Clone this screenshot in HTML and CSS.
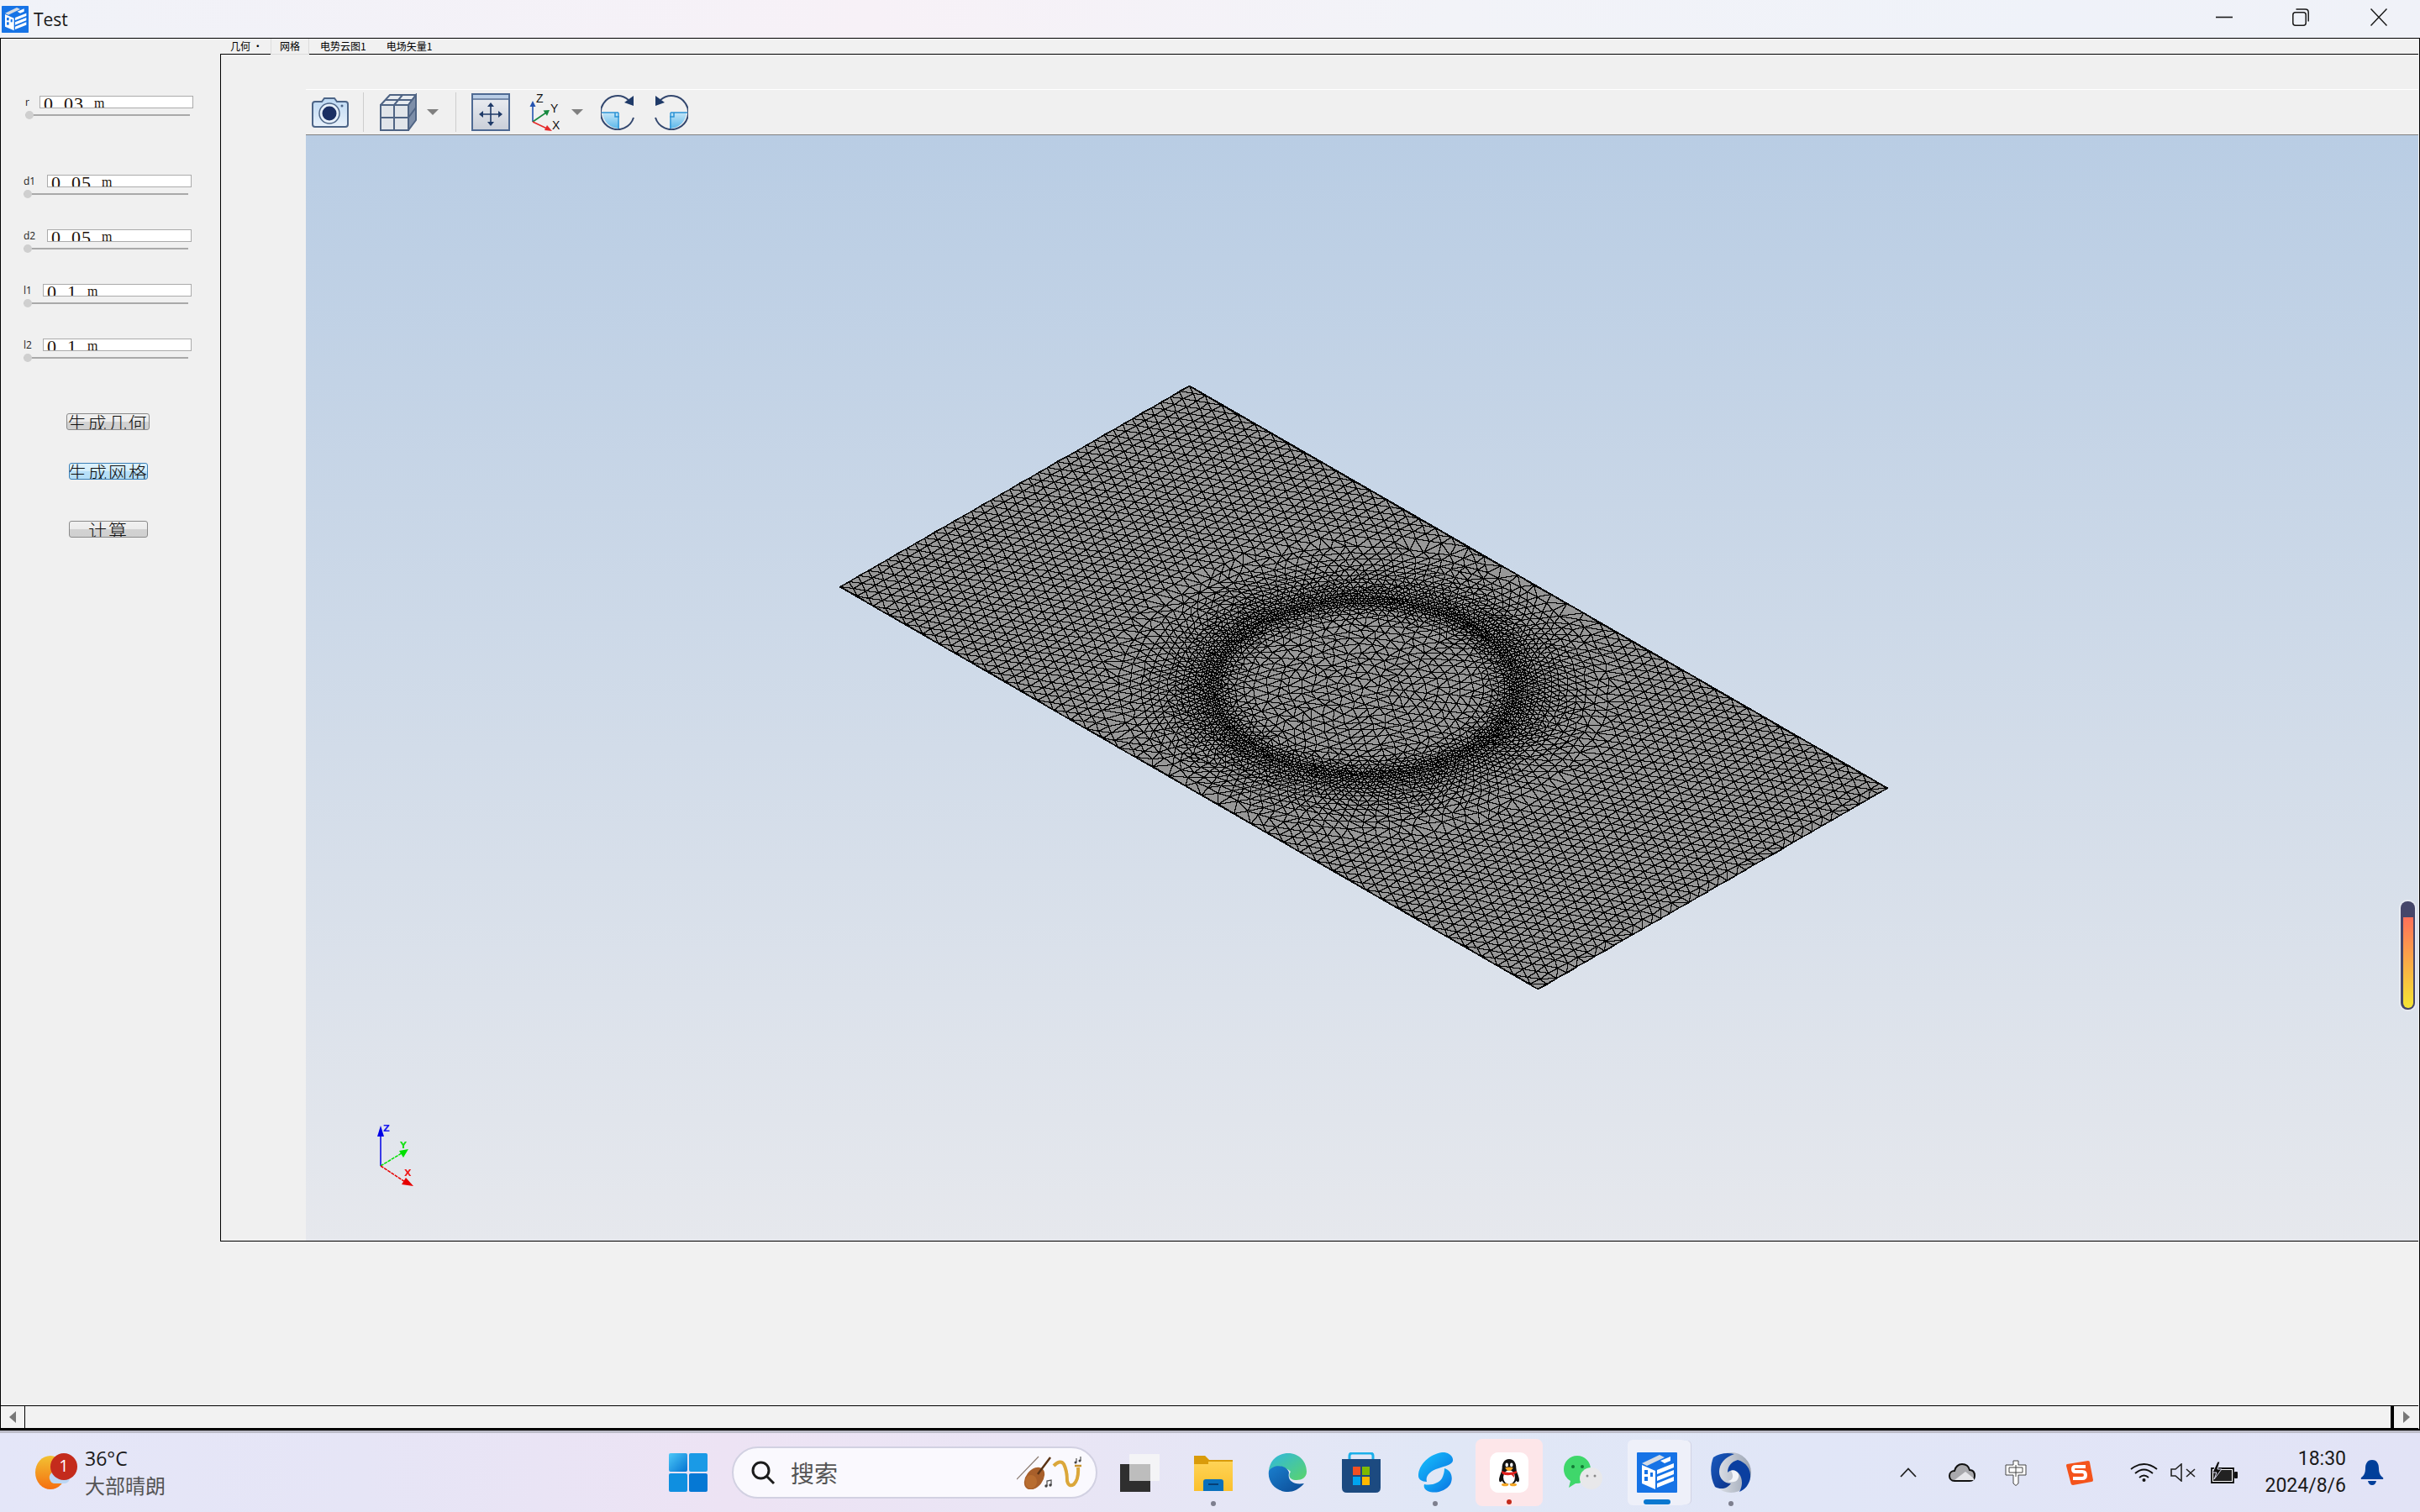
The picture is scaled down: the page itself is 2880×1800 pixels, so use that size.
FILE: index.html
```html
<!DOCTYPE html>
<html lang="zh">
<head>
<meta charset="utf-8">
<title>Test</title>
<link rel="stylesheet" href="styles.css">
</head>
<body>
<svg class="defs" width="0" height="0">
  <symbol id="applogo" viewBox="0 0 48 48">
    <rect width="48" height="48" rx="1" fill="#1673e6"/>
    <polygon points="6,13 27,3 33,6 12,16" fill="#d5dbe4"/>
    <polygon points="28,10 40,5 40,10 33,13" fill="#fff"/>
    <polygon points="6,15 22,22 22,44 6,37" fill="#fff"/>
    <rect x="9" y="21" width="4" height="5" fill="#1673e6"/>
    <rect x="9" y="29" width="4" height="5" fill="#1673e6"/>
    <rect x="16" y="24" width="3" height="5" fill="#1673e6"/>
    <polygon points="24,21 44,13 44,18 24,26" fill="#fff"/>
    <polygon points="24,29 44,21 44,26 24,34" fill="#fff"/>
    <polygon points="24,37 44,29 44,34 24,42" fill="#fff"/>
  </symbol>
  <linearGradient id="camfill" x1="0" y1="0" x2="0" y2="1"><stop offset="0" stop-color="#bcd8f3"/><stop offset="1" stop-color="#e8f1fa"/></linearGradient>
  <linearGradient id="fitfill" x1="0" y1="0" x2="0" y2="1"><stop offset="0" stop-color="#eef0f4"/><stop offset="1" stop-color="#c9ced8"/></linearGradient>
  <linearGradient id="rotfill" x1="0" y1="0" x2="0" y2="1"><stop offset="0" stop-color="#c4e6f8"/><stop offset="1" stop-color="#5db8ea"/></linearGradient>
  <linearGradient id="edgea" x1="0" y1="0" x2="1" y2="1"><stop offset="0" stop-color="#2fb7e0"/><stop offset="1" stop-color="#5bd46a"/></linearGradient>
  <linearGradient id="edgeb" x1="0" y1="0" x2="1" y2="1"><stop offset="0" stop-color="#1a7fce"/><stop offset="1" stop-color="#0b4a94"/></linearGradient>
  <linearGradient id="zbr" x1="0" y1="0" x2="1" y2="1"><stop offset="0" stop-color="#17c7ff"/><stop offset="1" stop-color="#0a6fe0"/></linearGradient>
  <linearGradient id="wina" x1="0" y1="0" x2="1" y2="1"><stop offset="0" stop-color="#4cc8f8"/><stop offset="1" stop-color="#0574d2"/></linearGradient>
  <linearGradient id="sun" x1="0" y1="0" x2="0" y2="1"><stop offset="0" stop-color="#f2c233"/><stop offset="1" stop-color="#f56f10"/></linearGradient>
  <linearGradient id="folder" x1="0" y1="0" x2="0" y2="1"><stop offset="0" stop-color="#ffd75e"/><stop offset="1" stop-color="#fbc02d"/></linearGradient>
  <linearGradient id="swirl" x1="0" y1="0" x2="1" y2="1"><stop offset="0" stop-color="#1a5cc0"/><stop offset="1" stop-color="#0a2f86"/></linearGradient>
  <linearGradient id="silver" x1="0" y1="0" x2="1" y2="0"><stop offset="0" stop-color="#e9ecf2"/><stop offset="1" stop-color="#9aa3b2"/></linearGradient>
</svg>

<header class="titlebar">
  <svg class="title-icon"><use href="#applogo"/></svg>
  <span class="title-text">Test</span>
  <div class="win-controls">
    <svg class="win-btn win-min" viewBox="0 0 20 21"><path d="M0 10.5H20" stroke="#1a1a1a" stroke-width="1.6"/></svg>
    <svg class="win-btn win-max" viewBox="0 0 20 21" fill="none" stroke="#1a1a1a" stroke-width="1.5"><rect x="0.8" y="4.8" width="15.4" height="15.4" rx="3"/><path d="M4.5 1H15.5Q19.2 1 19.2 4.7V15.5"/></svg>
    <svg class="win-btn win-close" viewBox="0 0 20 21" fill="none" stroke="#1a1a1a" stroke-width="1.5"><path d="M0.5 0.5L19.5 20.5M19.5 0.5L0.5 20.5"/></svg>
  </div>
</header>

<main class="window">
  <div class="work">
    <aside class="side">
      <div class="param param-r">
        <div class="param-row"><label class="param-label">r</label><div class="param-field"><span class="val">0<i class="dot">.</i>03 <i class="unit">m</i></span></div></div>
        <div class="slider"><span class="thumb"></span></div>
      </div>
      <div class="param param-d param-first">
        <div class="param-row"><label class="param-label">d1</label><div class="param-field"><span class="val">0<i class="dot">.</i>05 <i class="unit">m</i></span></div></div>
        <div class="slider"><span class="thumb"></span></div>
      </div>
      <div class="param param-d">
        <div class="param-row"><label class="param-label">d2</label><div class="param-field"><span class="val">0<i class="dot">.</i>05 <i class="unit">m</i></span></div></div>
        <div class="slider"><span class="thumb"></span></div>
      </div>
      <div class="param param-l">
        <div class="param-row"><label class="param-label">l1</label><div class="param-field"><span class="val">0<i class="dot">.</i>1 <i class="unit">m</i></span></div></div>
        <div class="slider"><span class="thumb"></span></div>
      </div>
      <div class="param param-l">
        <div class="param-row"><label class="param-label">l2</label><div class="param-field"><span class="val">0<i class="dot">.</i>1 <i class="unit">m</i></span></div></div>
        <div class="slider"><span class="thumb"></span></div>
      </div>
      <button class="act act-geo">生成几何</button>
      <button class="act act-mesh">生成网格</button>
      <button class="act act-calc">计算</button>
    </aside>

    <section class="tabs-area">
      <nav class="tabbar">
        <span class="tab tab-first">几何 ·</span>
        <span class="tab tab-active">网格</span>
        <span class="tab tab-third">电势云图1</span>
        <span class="tab">电场矢量1</span>
      </nav>
      <div class="pane">
        <div class="pane-gutter"></div>
        <div class="viewer">
          <div class="toolbar">
            <svg class="ti ti-cam" viewBox="0 0 45 37">
              <path d="M2 9Q2 6 5 6H13L16 2H28L31 6H41Q44 6 44 9V33Q44 36 41 36H5Q2 36 2 33Z" fill="url(#camfill)" stroke="#4d6587" stroke-width="2"/>
              <circle cx="22" cy="20" r="12" fill="#e8f1fa" stroke="#4d6587" stroke-width="1.5"/>
              <circle cx="22" cy="20" r="8.5" fill="#1b2f63"/>
              <circle cx="37" cy="11" r="1.5" fill="#4d6587"/>
            </svg>
            <span class="sep sep-1"></span>
            <svg class="ti ti-cube" viewBox="0 0 44 45" stroke="#4f6484" stroke-width="2" fill="none">
              <polygon points="1,14 12,2 43,2 34,14" fill="#e7ebf0"/>
              <rect x="1" y="14" width="33" height="30" fill="#e1e5ea"/>
              <polygon points="34,14 43,2 43,32 34,44" fill="#7d8ea8"/>
              <path d="M17 14V44M1 29H34M34 29L43 17M7 8H38M17 14L27 2"/>
            </svg>
            <span class="caret caret-1"></span>
            <span class="sep sep-2"></span>
            <svg class="ti ti-fit" viewBox="0 0 46 45">
              <rect x="1" y="1" width="44" height="43" fill="url(#fitfill)" stroke="#4f6a93" stroke-width="2"/>
              <rect x="2" y="2" width="42" height="4" fill="#b9cde6"/>
              <path d="M2 7H44" stroke="#4f6a93" stroke-width="1.5"/>
              <path d="M23 14V36M12 25H34" stroke="#1f3a68" stroke-width="1.6"/>
              <path d="M23 11L27 16H19ZM23 39L27 34H19ZM9 25L14 21V29ZM37 25L32 21V29Z" fill="#1f3a68"/>
            </svg>
            <svg class="ti ti-axes" viewBox="0 0 36 45">
              <path d="M4 34V11" stroke="#2453b0" stroke-width="1.6"/><path d="M4 9L7.5 16H.5Z" fill="#2453b0"/>
              <path d="M4 34L20 23" stroke="#16893f" stroke-width="1.6"/><path d="M24 20L21 27L16.500 20.500Z" fill="#16893f"/>
              <path d="M4 34L23 43" stroke="#e52b2b" stroke-width="1.6"/><path d="M27 45L18 44L21 38Z" fill="#e52b2b"/>
              <text x="8" y="11" class="axis-t">Z</text><text x="25" y="23" class="axis-t">Y</text><text x="27" y="43" class="axis-t">X</text>
            </svg>
            <span class="caret caret-2"></span>
            <svg class="ti ti-rot1" viewBox="0 0 42 42">
              <path d="M2 21H22V40A20 20 0 0 1 2 21Z" fill="url(#rotfill)"/>
              <path d="M17 21V26H22" fill="none" stroke="#2b93d5" stroke-width="1.5"/>
              <path d="M1 21H21M21 21V40" stroke="#2b93d5" stroke-width="1.3" fill="none"/>
              <path d="M39 27A20 20 0 1 1 33 6" fill="none" stroke="#34486f" stroke-width="2"/>
              <path d="M28 9L39 1V13Z" fill="#1f3a68"/>
            </svg>
            <svg class="ti ti-rot2" viewBox="0 0 42 42">
              <path d="M40 21H20V40A20 20 0 0 0 40 21Z" fill="url(#rotfill)"/>
              <path d="M25 21V26H20" fill="none" stroke="#2b93d5" stroke-width="1.500"/>
              <path d="M41 21H21M21 21V40" stroke="#2b93d5" stroke-width="1.3" fill="none"/>
              <path d="M3 27A20 20 0 1 0 9 6" fill="none" stroke="#34486f" stroke-width="2"/>
              <path d="M14 9L3 1V13Z" fill="#1f3a68"/>
            </svg>
          </div>
          <div class="viewport">
            <canvas id="mesh" class="mesh" width="2514" height="1316"></canvas>
            <svg class="triad" viewBox="0 0 60 90" width="60" height="90">
              <path d="M13 52V10" stroke="#0000e6" stroke-width="1.5"/><path d="M13 4L17 17H9Z" fill="#0000e6"/>
              <path d="M13 52L41 35" stroke="#00e000" stroke-width="1.5" stroke-dasharray="4 1"/><path d="M46 32L40 42L35 34Z" fill="#00e000"/>
              <path d="M13 52L42 71" stroke="#e60000" stroke-width="1.5" stroke-dasharray="4 1"/><path d="M52 76L38 74L43 66Z" fill="#e60000"/>
              <text x="16" y="11" class="triad-t tz">Z</text>
              <text x="36" y="31" class="triad-t ty">Y</text>
              <text x="41" y="64" class="triad-t tx">X</text>
            </svg>
            <div class="colorbar"><span class="colorbar-fill"></span></div>
          </div>
        </div>
      </div>
    </section>
  </div>
  <div class="hscroll">
    <span class="sb-btn sb-left"><i class="arr arr-l"></i></span>
    <span class="sb-track"></span>
    <span class="sb-thumb"></span>
    <span class="sb-btn sb-right"><i class="arr arr-r"></i></span>
  </div>
</main>

<footer class="taskbar">
  <div class="weather">
    <svg class="weather-icon" viewBox="0 0 44 40">
      <ellipse cx="18" cy="20" rx="18" ry="20" fill="url(#sun)"/>
      <path d="M18 30a7 7 0 0 1 2-10a9 9 0 0 1 16 1a6 6 0 0 1 2 11a5 5 0 0 1-3 1H22a5 5 0 0 1-4-3Z" fill="#bcd7f4"/>
    </svg>
    <span class="badge">1</span>
    <div class="weather-text"><span class="w-temp">36°C</span><span class="w-desc">大部晴朗</span></div>
  </div>
  <svg class="start" viewBox="0 0 46 46">
    <rect width="22" height="22" rx="2" fill="url(#wina)"/>
    <rect x="24" width="22" height="22" rx="2" fill="#1a9ae6"/>
    <rect y="24" width="22" height="22" rx="2" fill="#0f8fe0"/>
    <rect x="24" y="24" width="22" height="22" rx="2" fill="#0578d4"/>
  </svg>
  <div class="search">
    <svg class="search-glass" viewBox="0 0 30 30" fill="none" stroke="#1c1c1c" stroke-width="3"><circle cx="12.500" cy="12.500" r="9.500"/><path d="M19.500 19.500L28 28"/></svg>
    <span class="search-text">搜索</span>
    <svg class="search-art" viewBox="0 0 78 40">
      <path d="M0 28L26 1" stroke="#8a7a70" stroke-width="1.200"/>
      <ellipse cx="21" cy="27" rx="10" ry="15" transform="rotate(38 21 27)" fill="#a85f2a"/>
      <ellipse cx="17" cy="31" rx="7" ry="8" fill="#b86d30"/>
      <path d="M25 22L40 2" stroke="#5b3315" stroke-width="2.500"/>
      <path d="M36 36v-6l5-1v6" stroke="#555" stroke-width="1.300" fill="none"/>
      <circle cx="35" cy="36" r="1.700" fill="#444"/><circle cx="40" cy="35" r="1.700" fill="#444"/>
      <path d="M44 12Q52 4 56 10Q60 18 60 30Q62 38 68 34Q74 28 73 14" fill="none" stroke="#dba73a" stroke-width="4"/>
      <path d="M69 12H77" stroke="#c8922a" stroke-width="2.500"/>
      <path d="M71 3v5M76 1v5" stroke="#555" stroke-width="1.200"/><circle cx="70" cy="8" r="1.500" fill="#444"/><circle cx="75" cy="6" r="1.500" fill="#444"/>
    </svg>
  </div>
  <div class="apps">
    <div class="app">
      <svg class="app-icon" viewBox="0 0 48 48">
        <rect x="1" y="14" width="36" height="33" fill="#2f2f2f"/>
        <rect x="12" y="2" width="36" height="32" rx="1" fill="#f4f4f6"/>
        <rect x="12" y="14" width="25" height="20" fill="#bdbdbd"/>
      </svg>
    </div>
    <div class="app app-dot">
      <svg class="app-icon" viewBox="0 0 48 48">
        <path d="M1 4H14L19 9H47V46H1Z" fill="url(#folder)"/>
        <path d="M1 4H14L19 9H47V11H18V14H1Z" fill="#d99b0a"/>
        <path d="M12 46V35Q12 32 15 32H33Q36 32 36 35V46Z" fill="#0a70bc"/>
        <rect x="18" y="37" width="12" height="2" fill="#063f75"/>
      </svg>
    </div>
    <div class="app">
      <svg class="app-icon" viewBox="0 0 48 48">
        <path d="M2 22C3 9 13 1 25 1C38 1 47 11 47 23C47 30 41 33 35 33C28 33 24 29 28 23C23 17 10 17 2 22Z" fill="url(#edgea)"/>
        <path d="M2 22C8 13 23 15 26 24C24 33 30 39 44 37C38 44 31 47 25 47C11 47 0 36 2 22Z" fill="url(#edgeb)"/>
      </svg>
    </div>
    <div class="app">
      <svg class="app-icon" viewBox="0 0 48 48">
        <path d="M10 9V4Q10 1 13 1H35Q38 1 38 4V9" fill="none" stroke="#1cb0ea" stroke-width="3"/>
        <path d="M1 8H47V42Q47 48 41 48H7Q1 48 1 42Z" fill="#1c4a80"/>
        <rect x="14" y="17" width="9" height="10" fill="#f25022"/><rect x="25" y="17" width="9" height="10" fill="#7fba00"/>
        <rect x="14" y="29" width="9" height="10" fill="#00a4ef"/><rect x="25" y="29" width="9" height="10" fill="#ffb900"/>
      </svg>
    </div>
    <div class="app app-dot">
      <svg class="app-icon" viewBox="0 0 44 48">
        <path d="M30 0C16 2 2 14 2 28C2 32 6 35 12 35C10 28 16 22 26 19C34 16 42 15 43 10C44 4 36 -1 30 0Z" fill="url(#zbr)"/>
        <path d="M33 19C41 21 44 30 40 38C35 46 22 50 13 46C9 44 8 41 9 38C18 40 27 36 30 31C32 27 33 23 33 19Z" fill="url(#zbr)"/>
      </svg>
    </div>
    <div class="app app-qq">
      <span class="qq-tile">
        <svg class="qq-icon" viewBox="0 0 46 48">
          <path d="M23 1C14 1 11 9 11 16C11 22 7 28 6 34C5 40 8 42 11 38C12 42 16 44 23 44C30 44 34 42 35 38C38 42 41 40 40 34C39 28 35 22 35 16C35 9 32 1 23 1Z" fill="#111"/>
          <ellipse cx="23" cy="32" rx="10" ry="12" fill="#fff"/>
          <ellipse cx="19" cy="11" rx="2.500" ry="3.500" fill="#fff"/><ellipse cx="27" cy="11" rx="2.500" ry="3.500" fill="#fff"/>
          <path d="M16 16Q23 13 30 16Q27 21 23 21Q19 21 16 16Z" fill="#f5a623"/>
          <path d="M10 21Q23 27 36 21L36 25L31 27L32 33L27 28Q18 30 11 26Z" fill="#e0201c"/>
          <ellipse cx="16" cy="45" rx="6" ry="2.500" fill="#f5a623"/><ellipse cx="30" cy="45" rx="6" ry="2.500" fill="#f5a623"/>
        </svg>
      </span>
    </div>
    <div class="app">
      <svg class="app-icon" viewBox="0 0 48 48">
        <path d="M17 4C8 4 1 11 1 20C1 26 4 31 9 34L7 42L15 37C23 38 33 30 33 20C33 11 26 4 17 4Z" fill="#3fd76b"/>
        <circle cx="12" cy="17" r="2" fill="#127a35"/><circle cx="23" cy="17" r="2" fill="#127a35"/>
        <path d="M34 18C26 18 20 24 20 31C20 38 26 44 34 44C41 44 47 38 47 31C47 24 41 18 34 18Z" fill="#e8e8ea"/>
        <circle cx="29" cy="28" r="1.500" fill="#888"/><circle cx="38" cy="28" r="1.500" fill="#888"/>
      </svg>
    </div>
    <div class="app app-test">
      <span class="test-tile"><svg class="app-icon"><use href="#applogo"/></svg></span>
      <span class="test-bar"></span>
    </div>
    <div class="app app-dot">
      <svg class="app-icon" viewBox="0 0 48 48">
        <circle cx="24" cy="24" r="24" fill="url(#silver)"/>
        <path d="M3 6C10 1 20 0 28 2C16 6 10 14 10 23C10 31 16 37 24 37C20 43 12 45 5 41C-1 30 -1 16 3 6Z" fill="url(#swirl)"/>
        <path d="M32 9C42 12 48 20 47 30C46 38 41 44 34 47C38 40 38 32 34 26C30 20 24 20 20 24C20 16 25 11 32 9Z" fill="#0b3fa0"/>
        <path d="M24 22C30 20 36 26 32 32C30 36 24 36 20 34C26 34 28 28 24 22Z" fill="#f2f4f8"/>
      </svg>
    </div>
  </div>
  <div class="tray">
    <svg class="tr tr-caret" viewBox="0 0 20 12"><path d="M1 11L10 1.500L19 11" fill="none" stroke="#1f1f1f" stroke-width="1.800"/></svg>
    <svg class="tr tr-cloud" viewBox="0 0 32 22">
      <path d="M7 21C3 21 1 18 1 15C1 11 4 9 7 9C8 4 12 1 16 1C21 1 24 4 25 8C29 8 31 11 31 15C31 18 29 21 25 21Z" fill="#a9a9ad" stroke="#111" stroke-width="2"/>
      <path d="M7 20L20 10L30 18V20Z" fill="#e6e6ea"/>
    </svg>
    <svg class="tr tr-ime" viewBox="0 0 26 31" fill="#fff" stroke="#444" stroke-width="1">
      <path d="M10 1H16V6H25V18H16V28L13 30.500L10 28V18H1V6H10Z"/>
      <path d="M5 9H21V15H5ZM13 6V20" fill="none"/>
    </svg>
    <svg class="tr tr-sogou" viewBox="0 0 32 30">
      <path d="M1 5L26 1Q28 1 28 3L32 24Q32 26 30 26L8 30Q6 30 5.500 28L0 7Q0 5 1 5Z" fill="#f4541c"/>
      <path d="M23 8H11Q8 8 8 11Q8 14 11 14H19Q23 14 23 18Q23 22 19 22H8" fill="none" stroke="#fff" stroke-width="4"/>
    </svg>
    <svg class="tr tr-wifi" viewBox="0 0 33 24" fill="none" stroke="#111" stroke-width="1.800">
      <path d="M1 8Q16.500 -4 32 8M6 13Q16.500 4 27 13M11 18Q16.500 13 22 18"/>
      <circle cx="16.500" cy="21" r="2" fill="#111" stroke="none"/>
    </svg>
    <svg class="tr tr-vol" viewBox="0 0 30 22" fill="none" stroke="#222" stroke-width="1.600">
      <path d="M1 7H6L13 1V21L6 15H1Z"/><path d="M19 7L29 16M29 7L19 16"/>
    </svg>
    <svg class="tr tr-bat" viewBox="0 0 32 26">
      <path d="M1 8H27V25H1Z" fill="#fff" stroke="#111" stroke-width="1.800"/>
      <rect x="3" y="10" width="22" height="13" fill="#222"/>
      <rect x="28" y="12" width="4" height="8" rx="1" fill="#111"/>
      <path d="M8 0L2 13H7L4 21L13 9H8L11 0Z" fill="#111" stroke="#e3e3f6" stroke-width="1"/>
    </svg>
    <div class="clock"><span class="clock-t">18:30</span><span class="clock-d">2024/8/6</span></div>
    <svg class="tr tr-bell" viewBox="0 0 28 30">
      <path d="M14 0C8 0 6 5 6 10C6 16 4 19 1 21Q0 23 2 23H26Q28 23 27 21C24 19 22 16 22 10C22 5 20 0 14 0Z" fill="#003f9a"/>
      <path d="M9 25H19Q18 30 14 30Q10 30 9 25Z" fill="#003f9a"/>
    </svg>
  </div>
</footer>
<script src="mesh.js"></script>
</body>
</html>
```

FILE: styles.css
```css
* { box-sizing: border-box; }
html, body { margin: 0; padding: 0; }
body {
  width: 2880px; height: 1800px; overflow: hidden;
  display: flex; flex-direction: column;
  font-family: "Open Sans", "Noto Sans CJK SC", sans-serif;
  background: #f1f1f1; color: #111;
}
.defs { display: block; width: 0; height: 0; }
i { font-style: normal; }

/* title bar */
.titlebar {
  height: 45px; flex: none; display: flex; align-items: center;
  background: linear-gradient(90deg, #f0f2f8 0, #f7f1f7 36%, #f2f3f8 60%, #eff2f9 85%, #f0f2f8 100%);
}
.title-icon { width: 32px; height: 32px; margin-left: 2px; flex: none; }
.title-text { margin-left: 6px; font-size: 21px; color: #1a1a1a; }
.win-controls { margin-left: auto; display: flex; align-items: center; height: 100%; padding-bottom: 4px; }
.win-btn { width: 20px; height: 21px; flex: none; }
.win-max { margin-left: 71px; }
.win-close { margin-left: 73px; margin-right: 39px; }

/* application window */
.window {
  height: 1658px; flex: none; display: flex; flex-direction: column;
  border: 1px solid #000; border-bottom-width: 2px; background: #f1f1f1;
}
.work { flex: 1; min-height: 0; display: flex; align-items: flex-start; padding-right: 1px; }

/* left parameter panel */
.side { width: 261px; flex: none; display: flex; flex-direction: column; align-items: flex-start; padding-top: 68px; background: #f0f0f0; height: 100%; }
.param { width: 200px; display: flex; flex-direction: column; margin-top: 37px; }
.param-r { margin-top: 0; margin-left: 29px; }
.param-d, .param-l { margin-left: 27px; }
.param-first { margin-top: 66px; }
.param-row { display: flex; align-items: center; height: 15px; }
.param-label { flex: none; font-size: 12px; line-height: 15px; color: #222; white-space: nowrap; }
.param-r .param-label { width: 17px; }
.param-d .param-label { width: 28px; }
.param-l .param-label { width: 23px; }
.param-field {
  flex: 1; min-width: 0; height: 15px; background: #fff; border: 1.5px solid #ababab;
  overflow: hidden; padding-left: 4px;
}
.val {
  display: block; font-family: "Liberation Serif", serif; font-size: 22px; line-height: 12px;
  letter-spacing: 1px; word-spacing: 5.5px; color: #1d1209; white-space: nowrap; margin-top: 2px;
}
.dot { display: inline-block; width: 12px; font-size: 12px; }
.unit { font-size: 16px; letter-spacing: 0; vertical-align: 3px; }
.slider {
  width: 196px; height: 10px; margin-top: 3px; display: flex; align-items: center;
  background: linear-gradient(#a9a9a9, #a9a9a9) center / 100% 2px no-repeat;
}
.thumb { width: 10px; height: 10px; border-radius: 50%; background: #cfcfcf; }
.act {
  height: 20px; padding: 0; overflow: hidden; display: flex; align-items: center; justify-content: center;
  font-family: "Noto Sans CJK SC", sans-serif; font-size: 22px; line-height: 18px; letter-spacing: 2px; font-weight: 300; color: #111;
  border: 1px solid #8a8a8a; border-radius: 3px;
  background: linear-gradient(#f0f0f0 0, #ececec 50%, #d2d2d2 50%, #d0d0d0 100%);
  white-space: nowrap;
}
.act-geo { width: 99px; margin-left: 78px; margin-top: 61px; }
.act-mesh { width: 94px; margin-left: 81px; margin-top: 39px; border-color: #3a7fb5; background: linear-gradient(#dcf1fc 0, #d4eefb 50%, #b8e0f8 50%, #b4def7 100%); }
.act-calc { width: 94px; margin-left: 81px; margin-top: 49px; }

/* tabs */
.tabs-area { flex: 1; min-width: 0; display: flex; flex-direction: column; height: 1432px; }
.tabbar { height: 18px; flex: none; display: flex; align-items: stretch; font-family: "Noto Sans CJK SC", sans-serif; font-size: 12px; }
.tab { padding: 0 13px; line-height: 18px; color: #000; white-space: nowrap; }
.tab-first { width: 60px; padding: 0 0 0 12px; }
.tab-third { padding-right: 11px; }
.tab-active {
  position: relative; z-index: 1; width: 46px; height: 19px; padding: 0 10px; text-align: center;
  background: #f0f0f0; border: 1px solid #dcdcdc; border-top: 0;
}
.pane { flex: 1; min-height: 0; display: flex; border: 1px solid #000; border-right: 0; background: #f0f0f0; }
.pane-gutter { width: 101px; flex: none; }
.viewer { flex: 1; min-width: 0; display: flex; flex-direction: column; padding-top: 41px; }

/* toolbar */
.toolbar {
  height: 55px; flex: none; display: flex; align-items: center;
  background: #f0f0f0; border-top: 1px solid #fff; border-bottom: 1px solid #808080;
}
.ti { flex: none; display: block; }
.ti-cam { width: 45px; height: 37px; margin-left: 6px; }
.sep { width: 1px; height: 47px; background: #cdcdcd; flex: none; }
.sep-1 { margin-left: 17px; }
.ti-cube { width: 44px; height: 45px; margin-left: 19px; }
.caret { width: 0; height: 0; flex: none; border-left: 7px solid transparent; border-right: 7px solid transparent; border-top: 7px solid #808080; }
.caret-1 { margin-left: 12px; }
.sep-2 { margin-left: 20px; }
.ti-fit { width: 46px; height: 45px; margin-left: 18px; }
.ti-axes { width: 36px; height: 45px; margin-left: 23px; }
.axis-t { font-family: "Liberation Sans", sans-serif; font-size: 14px; fill: #111; }
.caret-2 { margin-left: 14px; }
.ti-rot1 { width: 42px; height: 42px; margin-left: 21px; }
.ti-rot2 { width: 42px; height: 42px; margin-left: 20px; }

/* 3D viewport */
.viewport {
  flex: 1; min-height: 0; position: relative; overflow: hidden;
  background: linear-gradient(#b9cde4 0, #e6e8ed 100%);
}
.mesh { display: block; width: 2514px; height: 1316px; }
.triad { position: absolute; left: 76px; top: 1175px; }
.triad-t { font-family: "DejaVu Sans", sans-serif; font-size: 11px; font-weight: 700; }
.tz { fill: #1a1af0; } .ty { fill: #1ae01a; } .tx { fill: #f01a1a; }
.colorbar {
  position: absolute; left: 2493px; top: 912px; width: 17px; height: 129px;
  background: #45466a; border-radius: 8px; box-shadow: 0 0 0 2px #e7eaf1;
  display: flex; justify-content: center; padding-top: 19px; padding-bottom: 2px;
}
.colorbar-fill { width: 12px; display: block; background: linear-gradient(#ff7059, #f5e533); border-radius: 0 0 6px 6px; }

/* horizontal scrollbar */
.hscroll { height: 28px; flex: none; display: flex; border-top: 1px solid #000; border-bottom: 1px solid #000; margin-right: 1px; background: #f2f2f2; }
.sb-btn { width: 29px; flex: none; display: flex; align-items: center; justify-content: center; }
.sb-left { border-right: 1px solid #000; }
.sb-track { flex: 1; }
.sb-thumb { width: 4px; background: #000; flex: none; }
.arr { width: 0; height: 0; border-top: 7px solid transparent; border-bottom: 7px solid transparent; }
.arr-l { border-right: 8px solid #777; }
.arr-r { border-left: 8px solid #777; }

/* taskbar */
.taskbar {
  height: 97px; flex: none; display: flex; align-items: center;
  border-top: 3px solid #bcbcc8;
  background: linear-gradient(90deg, #e4e6f8 0, #e6e5f6 15%, #ede3f4 30%, #eae5f5 42%, #e0e7f6 60%, #e1e6f7 75%, #e2e3f6 100%);
}
.weather { width: 796px; flex: none; display: flex; align-items: center; position: relative; padding-left: 42px; }
.weather-icon { width: 44px; height: 40px; flex: none; }
.badge {
  position: absolute; left: 60px; top: 8px; width: 32px; height: 32px; border-radius: 50%;
  background: #c42b1c; color: #fff; font-size: 20px; line-height: 30px; text-align: center; font-family: "Open Sans", sans-serif;
}
.weather-text { display: flex; flex-direction: column; margin-left: 15px; margin-top: -2px; }
.w-temp { font-size: 23px; line-height: 32px; color: #1a1a1a; }
.w-desc { font-family: "Noto Sans CJK SC", sans-serif; font-size: 24px; line-height: 32px; color: #555; }
.start { width: 46px; height: 46px; flex: none; margin-right: 29px; }
.search {
  width: 435px; height: 62px; flex: none; display: flex; align-items: center;
  background: #faf9fe; border-radius: 31px; border: 2px solid #d2d1e2; padding-left: 20px;
}
.search-glass { width: 30px; height: 30px; flex: none; }
.search-text { margin-left: 18px; font-family: "Noto Sans CJK SC", sans-serif; font-size: 28px; line-height: 32px; color: #555; }
.search-art { width: 78px; height: 40px; margin-left: auto; margin-right: 16px; flex: none; }
.apps { display: flex; align-items: center; height: 100%; margin-left: 6px; }
.app { width: 88px; height: 80px; flex: none; display: flex; align-items: center; justify-content: center; position: relative; }
.app-icon { width: 48px; height: 48px; display: block; }
.app-dot::after {
  content: ""; position: absolute; left: 41px; bottom: 0; width: 6px; height: 6px; border-radius: 50%; background: #7d7f8e;
}
.app-qq { background: #fde6e9; width: 80px; margin: 0 4px; border-radius: 8px; }
.app-qq::after {
  content: ""; position: absolute; left: 37px; bottom: 2px; width: 6px; height: 6px; border-radius: 50%; background: #c42b1c;
}
.qq-tile { width: 46px; height: 48px; background: #fff; border-radius: 10px; display: flex; align-items: center; justify-content: center; }
.qq-icon { width: 32px; height: 40px; display: block; }
.test-tile {
  width: 70px; height: 78px; background: #eef0f9; border-radius: 6px; display: flex; align-items: center; justify-content: center;
  box-shadow: 6px 0 0 -1px #eef0f9, 7px 0 0 -1px #d0d2e4;
}
.test-bar { position: absolute; left: 28px; bottom: 2px; width: 32px; height: 6px; background: #0a78d0; border-radius: 3px; }
.tray { display: flex; align-items: center; flex: none; margin-left: 157px; }
.tr { display: block; flex: none; }
.tr-caret { width: 20px; height: 12px; }
.tr-cloud { width: 32px; height: 22px; margin-left: 38px; }
.tr-ime { width: 26px; height: 31px; margin-left: 35px; }
.tr-sogou { width: 32px; height: 30px; margin-left: 47px; }
.tr-wifi { width: 33px; height: 24px; margin-left: 44px; }
.tr-vol { width: 30px; height: 22px; margin-left: 15px; }
.tr-bat { width: 32px; height: 26px; margin-left: 18px; }
.clock { width: 129px; flex: none; display: flex; flex-direction: column; align-items: flex-end; color: #1a1a1a; font-family: "Roboto", sans-serif; font-size: 23px; line-height: 32px; }
.tr-bell { width: 28px; height: 30px; margin-left: 17px; }
```

FILE: mesh.js
```js
// Builds a graded triangular surface mesh (a plate with a refined circle) and
// rasterises it without anti-aliasing, the way the VTK view does.
(function () {
  var canvas = document.getElementById('mesh');
  var ctx = canvas.getContext('2d');
  var OX = 364, OY = 161;
  var P0 = [1414.5 - OX, 459 - OY];
  var EX = [831 / 959, 479 / 959];
  var EY = [-415.5 / 479, 239 / 479];
  var W = 959, H = 479, CX = W / 2, CY = H / 2, R = 146;
  var HMIN = 4.6, HMAX = 13, SLOPE_OUT = 0.1, SLOPE_IN = 0.22;

  var seed = 12345;
  function rnd() { seed = (seed * 16807) % 2147483647; return seed / 2147483647; }
  function jit(a) { return (rnd() - 0.5) * 2 * a; }
  function size(d) { return Math.min(HMAX, HMIN + (d > 0 ? SLOPE_OUT : SLOPE_IN) * Math.abs(d)); }

  var pts = [];
  function inside(x, y, m) { return x > m && x < W - m && y > m && y < H - m; }
  function ring(r, off) {
    var h = size(r - R), n = Math.max(6, Math.round(2 * Math.PI * r / h)), ja = h * 0.14;
    for (var i = 0; i < n; i++) {
      var t = (i + off) / n * 2 * Math.PI;
      var x = CX + r * Math.cos(t) + jit(ja), y = CY + r * Math.sin(t) + jit(ja);
      if (inside(x, y, h * 0.7)) pts.push([x, y]);
    }
  }
  ring(R, 0);
  var r = R, k = 1, rOut;
  while (size(r - R) < HMAX) { r += size(r - R) * 0.88; ring(r, (k++ % 2) * 0.5); }
  rOut = r;
  r = R; k = 1;
  while (r > 14) { r -= size(r - R) * 0.88; if (r > 5) ring(r, (k++ % 2) * 0.5); }
  pts.push([CX + 0.1, CY + 0.1]);

  // regular lattice outside the graded zone, aligned with the plate edges
  var s = HMAX, colStep = s * 0.866;
  var nx = Math.round(W / colStep), ny = Math.round(H / s);
  var stepX = W / nx, stepY = H / ny;
  for (var j = 1; j < nx; j++) {
    for (var i = 0; i <= ny; i++) {
      var x = j * stepX + jit(0.8), y = (i + (j & 1) * 0.5) * stepY + jit(0.8);
      if (y < stepY * 0.4 || y > H - stepY * 0.4) continue;
      var d = Math.hypot(x - CX, y - CY);
      if (d < rOut + s * 0.65) continue;
      pts.push([x, y]);
    }
  }
  // boundary nodes share the lattice spacing so no slivers form along the edges
  for (i = 0; i <= nx; i++) {
    var oddCol = i & 1;
    if (!oddCol || i === 0 || i === nx) { pts.push([stepX * i, i * 1e-4]); pts.push([stepX * i + 1e-3, H - i * 1e-4]); }
  }
  for (i = 1; i < ny; i++) { pts.push([i * 1e-4, stepY * i]); pts.push([W - i * 1e-4, stepY * i + 1e-3]); }

  // Bowyer-Watson sweep
  function circ(i, j, k, P) {
    var x1 = P[i][0], y1 = P[i][1], x2 = P[j][0], y2 = P[j][1], x3 = P[k][0], y3 = P[k][1];
    var d = 2 * (x1 * (y2 - y3) + x2 * (y3 - y1) + x3 * (y1 - y2));
    var a1 = x1 * x1 + y1 * y1, a2 = x2 * x2 + y2 * y2, a3 = x3 * x3 + y3 * y3;
    var ux = (a1 * (y2 - y3) + a2 * (y3 - y1) + a3 * (y1 - y2)) / d;
    var uy = (a1 * (x3 - x2) + a2 * (x1 - x3) + a3 * (x2 - x1)) / d;
    var dx = x1 - ux, dy = y1 - uy;
    return { i: i, j: j, k: k, x: ux, y: uy, r: dx * dx + dy * dy };
  }
  var n = pts.length, P = pts.slice();
  var order = [];
  for (i = 0; i < n; i++) order.push(i);
  order.sort(function (p, q) { return P[q][0] - P[p][0]; });
  P.push([-20000, -20000], [CX, 40000], [40000, -20000]);
  var open = [circ(n, n + 1, n + 2, P)], closed = [];
  for (var q = order.length - 1; q >= 0; q--) {
    var c = order[q], edges = [], px = P[c][0], py = P[c][1];
    for (j = open.length - 1; j >= 0; j--) {
      var t = open[j], dx = px - t.x;
      if (dx > 0 && dx * dx > t.r) { closed.push(t); open.splice(j, 1); continue; }
      var dy = py - t.y;
      if (dx * dx + dy * dy - t.r > 1e-9) continue;
      edges.push(t.i, t.j, t.j, t.k, t.k, t.i);
      open.splice(j, 1);
    }
    var seen = {};
    for (j = 0; j < edges.length; j += 2) {
      var e0 = edges[j], e1 = edges[j + 1], key = e0 < e1 ? e0 + '_' + e1 : e1 + '_' + e0;
      seen[key] = (seen[key] || 0) + 1;
    }
    for (j = 0; j < edges.length; j += 2) {
      e0 = edges[j]; e1 = edges[j + 1]; key = e0 < e1 ? e0 + '_' + e1 : e1 + '_' + e0;
      if (seen[key] === 1) open.push(circ(e0, e1, c, P));
    }
  }
  closed = closed.concat(open);

  function sx(p) { return P0[0] + p[0] * EX[0] + p[1] * EY[0]; }
  function sy(p) { return P0[1] + p[0] * EX[1] + p[1] * EY[1]; }

  var img = ctx.createImageData(canvas.width, canvas.height), D = img.data, CW = canvas.width, CH = canvas.height;
  var det = EX[0] * EY[1] - EX[1] * EY[0];
  for (var yy = 280; yy < 1030; yy++) {
    for (var xx = 620; xx < 1900; xx++) {
      var rx = xx - P0[0], ry = yy - P0[1];
      var pu = (rx * EY[1] - ry * EY[0]) / det, pv = (ry * EX[0] - rx * EX[1]) / det;
      if (pu >= 0 && pu <= W && pv >= 0 && pv <= H) {
        var o = (yy * CW + xx) * 4;
        D[o] = D[o + 1] = D[o + 2] = 152; D[o + 3] = 255;
      }
    }
  }
  function plot(x, y) {
    if (x >= 0 && y >= 0 && x < CW && y < CH) {
      var o = (y * CW + x) * 4; D[o] = D[o + 1] = D[o + 2] = 0; D[o + 3] = 255;
    }
  }
  // 4-connected line: diagonals come out heavier than axis-aligned strokes
  function line(x0, y0, x1, y1) {
    x0 = Math.round(x0); y0 = Math.round(y0); x1 = Math.round(x1); y1 = Math.round(y1);
    var dx = Math.abs(x1 - x0), dy = -Math.abs(y1 - y0), sxx = x0 < x1 ? 1 : -1, syy = y0 < y1 ? 1 : -1, err = dx + dy;
    for (;;) {
      plot(x0, y0);
      if (x0 === x1 && y0 === y1) break;
      var e2 = 2 * err;
      var sx1 = e2 >= dy, sy1 = e2 <= dx;
      if (sx1) { err += dy; x0 += sxx; }
      if (sx1 && sy1) plot(x0, y0);
      if (sy1) { err += dx; y0 += syy; }
    }
  }
  var done = {};
  function edge(a1, a2) {
    if (a1 >= n || a2 >= n) return;
    var key = a1 < a2 ? a1 * 100000 + a2 : a2 * 100000 + a1;
    if (done[key]) return;
    done[key] = 1;
    line(sx(P[a1]), sy(P[a1]), sx(P[a2]), sy(P[a2]));
  }
  closed.forEach(function (t) { edge(t.i, t.j); edge(t.j, t.k); edge(t.k, t.i); });
  var cs = [[0, 0], [W, 0], [W, H], [0, H]];
  for (i = 0; i < 4; i++) {
    var p1 = cs[i], p2 = cs[(i + 1) % 4];
    line(sx(p1), sy(p1), sx(p2), sy(p2));
  }
  ctx.putImageData(img, 0, 0);
})();
```
